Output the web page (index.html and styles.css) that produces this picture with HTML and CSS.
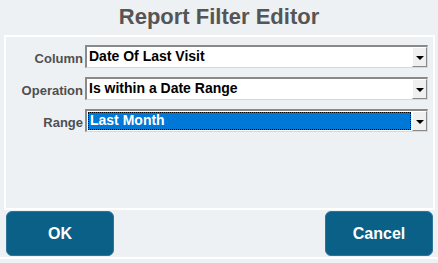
FILE: index.html
```html
<!DOCTYPE html>
<html>
<head>
<meta charset="utf-8">
<link rel="stylesheet" href="styles.css">
</head>
<body>
<div class="dialog">
  <h1 class="title">Report Filter Editor</h1>
  <div class="panel">
    <div class="form">
      <label class="lbl">Column</label>
      <div class="sel">
        <span class="val">Date Of Last Visit</span>
        <span class="btn"><span class="tri"></span></span>
      </div>
      <label class="lbl">Operation</label>
      <div class="sel">
        <span class="val">Is within a Date Range</span>
        <span class="btn"><span class="tri"></span></span>
      </div>
      <label class="lbl">Range</label>
      <div class="sel focus">
        <span class="val">Last Month</span>
        <span class="btn"><span class="tri"></span></span>
      </div>
    </div>
  </div>
  <div class="footer">
    <button class="action">OK</button>
    <button class="action">Cancel</button>
  </div>
</div>
</body>
</html>
```
FILE: styles.css
```css
html, body {
  margin: 0;
  padding: 0;
  background: #edf1f4;
  font-family: "Liberation Sans", Arial, sans-serif;
}
.dialog {
  width: 438px;
  height: 263px;
  display: flex;
  flex-direction: column;
}
.title {
  margin: 0;
  height: 35px;
  line-height: 34px;
  text-align: center;
  font-size: 22px;
  font-weight: bold;
  color: #555555;
}
.panel {
  margin: 0 3px 0 4px;
  height: 171px;
  border: 2px solid #ffffff;
  border-bottom-width: 2px;
}
.form {
  display: grid;
  grid-template-columns: 77px 343px;
  column-gap: 2px;
  row-gap: 9px;
  padding: 8px 0 0 0;
  align-items: center;
}
.lbl {
  text-align: right;
  font-size: 13px;
  font-weight: bold;
  color: #4f4f4f;
  padding-top: 3px;
}
.sel {
  height: 23px;
  box-sizing: border-box;
  display: flex;
  align-items: stretch;
  background: #ffffff;
  border-top: 2px solid #8a8a8a;
  border-left: 2px solid #8a8a8a;
  border-right: 1px solid #d8d8d8;
  border-bottom: 1px solid #d8d8d8;
}
.val {
  flex: 1;
  font-size: 14px;
  font-weight: bold;
  color: #000000;
  padding-left: 2px;
  line-height: 19px;
}
.btn {
  width: 15px;
  box-sizing: border-box;
  background: #f0f0f0;
  border-top: 1px solid #ffffff;
  border-left: 1px solid #ffffff;
  border-right: 1px solid #8a8a8a;
  border-bottom: 1px solid #8a8a8a;
  display: flex;
  align-items: center;
  justify-content: center;
}
.tri {
  width: 0;
  height: 0;
  border-left: 4px solid transparent;
  border-right: 4px solid transparent;
  border-top: 4px solid #000000;
  margin-top: 2px;
}
.sel.focus .val {
  background: #0078d7;
  color: #ffffff;
  outline: 1px dotted #000000;
  outline-offset: -1px;
  margin: 1px;
  line-height: 17px;
}
.footer {
  display: flex;
  justify-content: space-between;
  padding: 1px 5px 0 6px;
  height: 46px;
  border-bottom: 2px solid #ffffff;
}
.action {
  width: 108px;
  height: 45px;
  background: #0a6086;
  border: 1px solid #2f7499;
  border-radius: 6px;
  color: #ffffff;
  font-family: "Liberation Sans", Arial, sans-serif;
  font-size: 16px;
  font-weight: bold;
  padding: 0;
}
```
